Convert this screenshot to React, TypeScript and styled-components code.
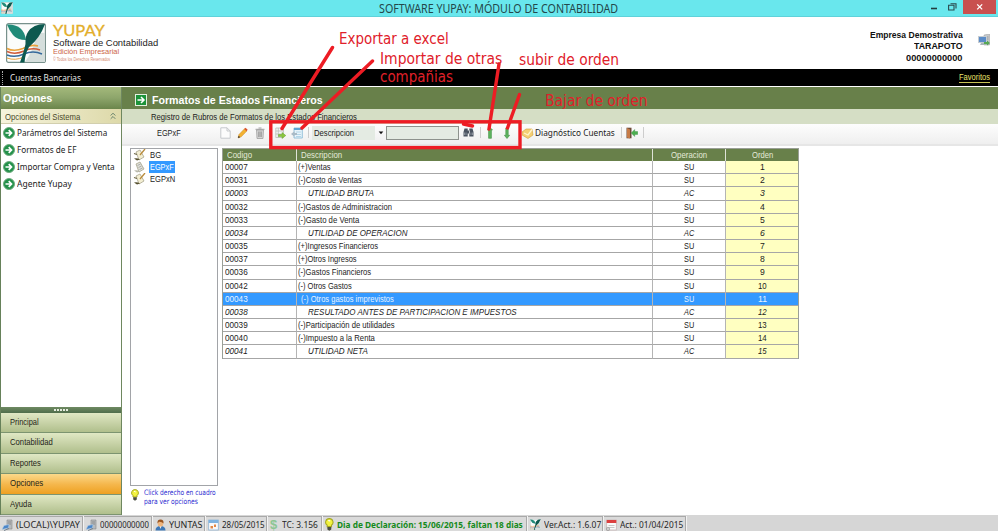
import React, { useLayoutEffect, useRef, useState } from "react";
import styled, { createGlobalStyle, css } from "styled-components";

const SANS = '"Liberation Sans", Arial, sans-serif';
const UI = '"Noto Sans", "Open Sans", sans-serif';

const Global = createGlobalStyle`
  * { box-sizing: border-box; }
  html, body { margin: 0; padding: 0; background: #fff; overflow: hidden; }
  svg { display: block; flex: none; }
`;

/* Text condensed or widened to a given width */
const FitBox = styled.span<{ $w: number }>`
  display: block;
  flex: none;
  width: ${(p) => p.$w}px;
  white-space: pre;
`;
const FitInner = styled.span`
  display: inline-block;
  transform-origin: 0 50%;
`;
function Fit({ w, children }: { w: number; children: string }) {
  const ref = useRef<HTMLSpanElement>(null);
  const [scale, setScale] = useState(1);
  useLayoutEffect(() => {
    if (ref.current) setScale(w / ref.current.offsetWidth);
  }, [w, children]);
  return (
    <FitBox $w={w}>
      <FitInner ref={ref} style={{ transform: `scaleX(${scale})` }}>{children}</FitInner>
    </FitBox>
  );
}

const Window = styled.div`
  position: relative;
  width: 998px;
  height: 531px;
  display: flex;
  flex-direction: column;
  background: #fff;
  font-family: ${SANS};
  font-size: 9.8px;
  color: #1c1c1c;
`;

const TitleBar = styled.header`
  height: 17px;
  flex: none;
  display: flex;
  justify-content: space-between;
  background: #69e7ed;
  border-bottom: 1px solid #5fd2da;
  padding: 0 2px 0 1px;
`;
const TitleIcon = styled.div`
  padding-top: 2px;
  width: 378px;
`;
const TitleText = styled.div`
  font: 12px/17px ${UI};
  color: #24484b;
`;
const WinButtons = styled.div`
  flex: 1;
  display: flex;
  justify-content: flex-end;
`;

const Banner = styled.div`
  height: 52px;
  flex: none;
  display: flex;
  padding-left: 6px;
`;
const LogoWrap = styled.div`
  padding-top: 6px;
  width: 47px;
`;
const Brand = styled.div`
  flex: 1;
  padding-top: 6px;
`;
const BrandName = styled.div`
  font: 15.5px/15px Lato, ${SANS};
  color: #e3ae2b;
  -webkit-text-stroke: 0.3px #e3ae2b;
`;
const BrandLine = styled.div`
  font: 9.5px/9px ${SANS};
  color: #222;
`;
const BrandEdition = styled.div`
  font: 8px/10px ${SANS};
  color: #cc6647;
`;
const BrandRights = styled.div`
  font: 4.5px/6px ${SANS};
  color: #d58a72;
`;
const Company = styled.div`
  display: flex;
  flex-direction: column;
  align-items: flex-end;
  padding-top: 11.5px;
  margin-right: 16px;
  font: bold 9.8px/11.6px ${SANS};
  color: #111;
`;
const BannerIcon = styled.div`
  padding: 17px 8px 0 0;
`;

const MenuBar = styled.div`
  height: 17px;
  flex: none;
  display: flex;
  align-items: center;
  justify-content: space-between;
  background: #000;
  color: #e4e4e4;
  font: 9.5px/16px ${UI};
  padding: 0 8px 0 2px;
`;
const MenuLeft = styled.div`
  display: flex;
  align-items: center;
`;
const Grip = styled.i`
  height: 14px;
  width: 8px;
  border-left: 1px dotted #aaa;
`;
const Favorites = styled.a`
  font: 9px/9px ${SANS};
  color: #e9e36b;
  border-bottom: 1px solid #c9c455;
`;

const Body = styled.div`
  height: 428px;
  flex: none;
  display: flex;
  margin-top: 1px;
`;

const Sidebar = styled.aside`
  width: 121.5px;
  flex: none;
  display: flex;
  flex-direction: column;
  border-left: 1px solid #66815a;
  border-right: 1px solid #6e875f;
`;
const SideTitle = styled.h2`
  margin: 0;
  height: 22px;
  padding-left: 1.7px;
  font: bold 11.5px/22px ${SANS};
  color: #fff;
  background: linear-gradient(#a4b97b, #8da56b 50%, #6b854b);
`;
const SideGroup = styled.div`
  height: 15px;
  display: flex;
  justify-content: space-between;
  align-items: center;
  padding: 0 5px 0 3.5px;
  color: #4a4a2c;
  background: linear-gradient(90deg, #f6f4dd, #ddd9a9);
  border-bottom: 1px solid #d2cfae;
`;
const SideList = styled.nav`
  flex: 1;
`;
const SideLink = styled.div`
  height: 17px;
  display: flex;
  align-items: center;
  gap: 2px;
  padding-left: 1.5px;
  font: 9.5px/16px ${UI};
  color: #222;
`;
const Splitter = styled.div`
  height: 6px;
  display: flex;
  justify-content: center;
  align-items: center;
  gap: 1px;
  background: linear-gradient(#6f8a62, #4f6d4b);
`;
const Dot = styled.i`
  width: 2px;
  height: 2px;
  background: #e6ecdf;
`;
const NavButton = styled.div<{ $active?: boolean }>`
  height: 20.5px;
  padding-left: 9px;
  line-height: 18px;
  color: #1f2418;
  border-bottom: 1px solid #7c9470;
  background: ${(p) =>
    p.$active ? "linear-gradient(#fbd98a, #f5b84e 50%, #eea020)" : "linear-gradient(#e0e8c4, #c8d3a8 50%, #b0bf8c)"};
`;

const Main = styled.main`
  flex: 1;
  display: flex;
  flex-direction: column;
`;
const PageTitle = styled.h1`
  margin: 0;
  height: 22px;
  display: flex;
  align-items: center;
  gap: 5px;
  padding: 3px 0 0 13px;
  background: #68804a;
  color: #fff;
  font: bold 11px/18px ${SANS};
`;
const PageSub = styled.div`
  height: 15px;
  padding-left: 29.5px;
  line-height: 15px;
  background: #d5dec5;
`;
const Toolbar = styled.div`
  height: 22px;
  display: flex;
  align-items: center;
  padding: 0 0 3px 35px;
  background: linear-gradient(#fdfdfd, #efefef);
  border-bottom: 2px solid #e6e6e6;
`;
const Tool = styled.div<{ $w: number }>`
  width: ${(p) => p.$w}px;
  flex: none;
`;
const Sep = styled.i<{ $w: number }>`
  width: ${(p) => p.$w}px;
  height: 11px;
  border-left: 1px solid #cdcdcd;
`;
const Combo = styled.div`
  width: 74px;
  display: flex;
  align-items: center;
`;
const ComboText = styled.div`
  width: 63px;
  height: 14px;
  line-height: 14px;
  padding-left: 2px;
  background: #e4ebe3;
  margin-right: 3px;
`;
const Search = styled.div`
  width: 73px;
  height: 14px;
  margin-right: 4px;
  background: #e4ebe3;
  border: 1px solid #8d928d;
`;
const ToolText = styled.div`
  width: 86px;
  font: 9.5px/14px ${UI};
`;

const Content = styled.div`
  flex: 1;
  display: flex;
  gap: 4.5px;
  padding: 2px 0 0 8.5px;
`;
const TreeCol = styled.div`
  width: 87.5px;
  flex: none;
`;
const Tree = styled.div`
  height: 338px;
  border: 1px solid #a2a4a8;
  padding-left: 2px;
`;
const TreeRow = styled.div`
  height: 12px;
  display: flex;
  align-items: center;
  gap: 2.5px;
`;
const TreeLabel = styled.span<{ $on?: boolean }>`
  padding: 0 1px 0 1.5px;
  line-height: 12px;
  ${(p) => p.$on && css`background: #3399ff; color: #fff;`}
`;
const Hint = styled.div`
  display: flex;
  gap: 5px;
  padding: 3px 0 0 1px;
  font: 7.5px/8.7px "DejaVu Sans", sans-serif;
  color: #2a2ad0;
`;

const Table = styled.div`
  width: 577px;
  height: 211px;
  border: 1px solid #9a9f96;
`;
const Row = styled.div<{ $kind?: "head" | "total" | "sel" }>`
  display: grid;
  grid-template-columns: 73.5px 356px 73.5px 1fr;
  height: 13.18px;
  line-height: 12px;
  ${(p) => p.$kind === "head" && css`
    height: 12px; background: #68804a; color: #e4ead8;
    > div { border-bottom: 0; border-right-color: #dfe3d8; padding-left: 4px; }
  `}
  ${(p) => p.$kind === "total" && css`font-style: italic;`}
  ${(p) => p.$kind === "sel" && css`background: #3399ff; color: #e8f3ff;`}
`;
const Cell = styled.div<{ $center?: boolean; $yellow?: boolean; $indent?: number }>`
  display: flex;
  padding-left: ${(p) => p.$indent ?? 2}px;
  border-right: 1px solid #b4b4b4;
  border-bottom: 1px solid #a6a6a6;
  ${(p) => p.$center && css`justify-content: center; padding-left: 0 !important;`}
  ${(p) => p.$yellow && css`background: #ffffc1;`}
  &:last-child { border-right: 0; }
`;

const StatusBar = styled.footer`
  height: 16px;
  flex: none;
  display: flex;
  background: #d6d6d6;
  gap: 1px;
  padding-top: 1px;
`;
const StatusCell = styled.div<{ $w: number; $green?: boolean }>`
  width: ${(p) => p.$w}px;
  flex: none;
  display: flex;
  align-items: center;
  gap: 3px;
  padding: 1px 0 0 2px;
  overflow: hidden;
  background: #dadada;
  border: 1px solid #a9a9a9;
  border-width: 1px 1px 0 0;
  box-shadow: 1px 0 0 #f2f2f2;
  font: 9.5px/13px ${UI};
  color: #262626;
  ${(p) => p.$green && css`color: #158a1c; font-weight: bold;`}
`;

const Marks = styled.div`
  position: absolute;
  inset: 0;
  pointer-events: none;
`;
const Note = styled.div<{ $x: number; $y: number }>`
  position: absolute;
  left: ${(p) => p.$x}px;
  top: ${(p) => p.$y}px;
  font: 16px/20px "DejaVu Sans", sans-serif;
  color: #e0202a;
`;

const Logo = ({ s }: { s: number }) => (
  <svg width={s} height={s} viewBox="0 0 40 40">
    <rect x="0.6" y="0.6" width="38.8" height="38.8" rx="2" fill="#fbfcfb" stroke="#78918c" strokeWidth="1.2" />
    <path d="M31 11 Q37 9 39 10 V39 H19 Q27 28 31 11Z" fill="#d5dedc" />
    <path d="M1 25.5 Q8 29 17 25.5 Q25 21 32 23" fill="none" stroke="#e8a13a" strokeWidth="1.6" />
    <path d="M1 28.5 Q9 32 18 28 Q26 24 34 27" fill="none" stroke="#cf5b3a" strokeWidth="1.5" />
    <path d="M1 32 Q9 35 18 31 Q27 27 36 31" fill="none" stroke="#35699c" strokeWidth="1.5" />
    <path d="M1 35 Q9 38 18 34" fill="none" stroke="#e8a13a" strokeWidth="1" />
    <path d="M1 1.5 Q9 1 14 5 Q19 9 20 17 Q11 17 7 12 Q3 7 1 1.5Z" fill="#208a78" />
    <path d="M39 1 Q27 1 22 9 Q19 13 19.5 21 Q18 28 14 39.5 H18.5 Q19 31 23 24 Q34 15 39 1Z" fill="#0d594f" />
  </svg>
);
const ArrowBall = () => (
  <svg width="12" height="12" viewBox="0 0 12 12">
    <circle cx="6" cy="6" r="5.5" fill="#23914a" stroke="#71ad80" />
    <path d="M2.5 6H8.4M5.7 3.2L8.5 6L5.7 8.8" fill="none" stroke="#fff" strokeWidth="1.7" />
  </svg>
);
const ArrowSquare = () => (
  <svg width="12" height="12" viewBox="0 0 12 12">
    <rect x=".5" y=".5" width="11" height="11" fill="#1c9339" stroke="#e4f0df" />
    <path d="M2.5 6H8.7M6 3L9 6L6 9" fill="none" stroke="#fff" strokeWidth="1.5" />
  </svg>
);
const Scroll = ({ grey }: { grey?: boolean }) => (
  <svg width="13" height="12" viewBox="0 0 13 12">
    <path d="M3 3L7 1L11 8L6 11Z" fill={grey ? "#dedfd6" : "#f3eed2"} stroke="#a8a58e" strokeWidth=".8" />
    {grey ? (
      <path d="M4.5 4.5L7.5 3M5.5 6.5L8.5 5M6.5 8.5L9.5 7" stroke="#999" strokeWidth=".7" />
    ) : (
      <>
        <path d="M12 0L7 6" stroke="#b98b3c" strokeWidth="1.3" />
        <path d="M1 4.5L4 5.5" stroke="#6b6544" strokeWidth="1.2" />
      </>
    )}
    <path d="M1 9.5Q4 8.5 7 10.5L4 11.5Z" fill={grey ? "#b9b9ac" : "#57512f"} />
  </svg>
);
const Bulb = ({ h = 12 }: { h?: number }) => (
  <svg width={(h * 8) / 12} height={h} viewBox="0 0 8 12">
    <path d="M4 .6A3.3 3.3 0 0 1 6 6.6V8H2V6.6A3.3 3.3 0 0 1 4 .6Z" fill="#f2f23e" stroke="#a5a823" />
    <path d="M3 2.6Q4 2 4.7 3" stroke="#fff" fill="none" />
    <path d="M2.2 8.3H5.8V10.6L4 11.7L2.2 10.6Z" fill="#4c4f42" />
  </svg>
);
const Computer = () => (
  <svg width="12" height="12" viewBox="0 0 12 12">
    <path d="M6 1L11.5 0V11H6Z" fill="#c5c8cb" stroke="#999" strokeWidth=".5" />
    <path d="M7.5 3H10.5M7.5 5H10.5" stroke="#888" strokeWidth=".7" />
    <rect x=".5" y="2.5" width="8" height="6" fill="#5b8cc8" stroke="#c5ccd2" />
    <path d="M3 9L8 8.5L11 11H2Z" fill="#a9b6b8" />
    <path d="M6 8H9V6.5L12 9L9 11.5V10H6Z" fill="#57a854" />
  </svg>
);
const Server = () => (
  <svg width="11" height="12" viewBox="0 0 11 12">
    <path d="M5 1H10V10H5Z" fill="#b7babd" stroke="#888" strokeWidth=".6" />
    <path d="M6 3H9M6 5H9" stroke="#777" strokeWidth=".7" />
    <path d="M0 10.5L2 6.5L7 5.5L6.5 9Z" fill="#4b86c8" stroke="#b7cee5" strokeWidth=".6" />
    <path d="M2 11.5L7 9.5" stroke="#75818c" />
  </svg>
);
const User = () => (
  <svg width="11" height="12" viewBox="0 0 11 12">
    <path d="M.5 11.5Q.5 7 5.5 7Q10.5 7 10.5 11.5Z" fill="#3d78b8" />
    <path d="M4.5 7L5.5 10L6.5 7Z" fill="#f3f3f3" />
    <ellipse cx="5.5" cy="4.4" rx="2.7" ry="3.2" fill="#eeb57e" />
    <path d="M2.5 4.6Q2 .4 5.5.4Q9 .4 8.5 4.6Q7 2.5 4 2.7Z" fill="#99541f" />
  </svg>
);
const Cal = ({ red }: { red?: boolean }) => (
  <svg width="11" height="12" viewBox="0 0 11 12">
    <rect x=".7" y="1" width="9.6" height="10" fill="#fafafa" stroke={red ? "#c9b4b4" : "#8fb4d4"} strokeWidth=".8" />
    <rect x=".7" y="1" width="9.6" height="3" fill={red ? "#dc3f3f" : "#7fb3e0"} />
    {red ? <path d="M2.5 6.5H8.5M2.5 8.5H8.5" stroke="#bbb" strokeWidth=".8" /> : <path d="M2.5 7H5V9.5H2.5ZM6 5.5H8V8H6Z" fill="#e38745" />}
    {red && <circle cx="2" cy="10" r="1.7" fill="#cfcfcf" stroke="#888" strokeWidth=".5" />}
  </svg>
);
const Dollar = styled.span`
  font: bold 13px/13px ${SANS};
  color: #8cc694;
  width: 9px;
`;

type Item = [string, string, number, string, string, ("total" | "sel")?];
const rows: Item[] = [
  ["00007", "(+)Ventas", 32.5, "SU", "1"],
  ["00031", "(-)Costo de Ventas", 64, "SU", "2"],
  ["00003", "UTILIDAD BRUTA", 66, "AC", "3", "total"],
  ["00032", "(-)Gastos de Administracion", 94, "SU", "4"],
  ["00033", "(-)Gasto de Venta", 61, "SU", "5"],
  ["00034", "UTILIDAD DE OPERACION", 99, "AC", "6", "total"],
  ["00035", "(+)Ingresos Financieros", 80, "SU", "7"],
  ["00037", "(+)Otros Ingresos", 59, "SU", "8"],
  ["00036", "(-)Gastos Financieros", 73, "SU", "9"],
  ["00042", "(-) Otros Gastos", 53.5, "SU", "10"],
  ["00043", "(-) Otros gastos imprevistos", 92.5, "SU", "11", "sel"],
  ["00038", "RESULTADO ANTES DE PARTICIPACION E IMPUESTOS", 209, "AC", "12", "total"],
  ["00039", "(-)Participación de utilidades", 97, "SU", "13"],
  ["00040", "(-)Impuesto a la Renta", 76.5, "SU", "14"],
  ["00041", "UTILIDAD NETA", 60, "AC", "15", "total"],
];
const links: [string, number][] = [
  ["Parámetros del Sistema", 90.5],
  ["Formatos de EF", 59.5],
  ["Importar Compra y Venta", 98],
  ["Agente Yupay", 54.5],
];
const navs: [string, number][] = [
  ["Principal", 29],
  ["Contabilidad", 42.5],
  ["Reportes", 31],
  ["Opciones", 33],
  ["Ayuda", 22],
];

export default function App() {
  return (
    <Window>
      <Global />
      <TitleBar>
        <TitleIcon><Logo s={12} /></TitleIcon>
        <TitleText><Fit w={239}>SOFTWARE YUPAY: MÓDULO DE CONTABILIDAD</Fit></TitleText>
        <WinButtons>
          <svg width="66" height="14" viewBox="0 0 66 14">
            <path d="M1 8.5H7" stroke="#233c3f" strokeWidth="1.6" />
            <path d="M20.5 3.8H26V8.5M18.6 5.3H24V10H18.6Z" fill="none" stroke="#2b4a4d" strokeWidth="1.1" />
            <rect x="33" width="33" height="14" fill="#c9504f" />
            <path d="M47.2 4.4L52.2 9.4M52.2 4.4L47.2 9.4" stroke="#fff" strokeWidth="1.3" />
          </svg>
        </WinButtons>
      </TitleBar>

      <Banner>
        <LogoWrap><Logo s={40} /></LogoWrap>
        <Brand>
          <BrandName><Fit w={52}>YUPAY</Fit></BrandName>
          <BrandLine><Fit w={105}>Software de Contabilidad</Fit></BrandLine>
          <BrandEdition><Fit w={66}>Edición Empresarial</Fit></BrandEdition>
          <BrandRights><Fit w={57}>© Todos los Derechos Reservados</Fit></BrandRights>
        </Brand>
        <Company>
          <Fit w={92.5}>Empresa Demostrativa</Fit>
          <Fit w={48.5}>TARAPOTO</Fit>
          <Fit w={56.5}>00000000000</Fit>
        </Company>
        <BannerIcon><Computer /></BannerIcon>
      </Banner>

      <MenuBar>
        <MenuLeft><Grip /><Fit w={70.5}>Cuentas Bancarias</Fit></MenuLeft>
        <Favorites><Fit w={31}>Favoritos</Fit></Favorites>
      </MenuBar>

      <Body>
        <Sidebar>
          <SideTitle><Fit w={49}>Opciones</Fit></SideTitle>
          <SideGroup>
            <Fit w={75}>Opciones del Sistema</Fit>
            <svg width="6" height="8" viewBox="0 0 6 8">
              <path d="M.7 3.5L3 1.2L5.3 3.5M.7 6.8L3 4.5L5.3 6.8" fill="none" stroke="#66806a" />
            </svg>
          </SideGroup>
          <SideList>
            {links.map(([t, w]) => (
              <SideLink key={t}><ArrowBall /><Fit w={w}>{t}</Fit></SideLink>
            ))}
          </SideList>
          <Splitter><Dot /><Dot /><Dot /><Dot /><Dot /></Splitter>
          {navs.map(([t, w]) => (
            <NavButton key={t} $active={t === "Opciones"}><Fit w={w}>{t}</Fit></NavButton>
          ))}
        </Sidebar>

        <Main>
          <PageTitle><ArrowSquare /><Fit w={171}>Formatos de Estados Financieros</Fit></PageTitle>
          <PageSub><Fit w={205.5}>Registro de Rubros de Formatos de los Estados Financieros</Fit></PageSub>
          <Toolbar>
            <Tool $w={63}><Fit w={24}>EGPxF</Fit></Tool>
            <Tool $w={17}>
              <svg width="11" height="12" viewBox="0 0 11 12">
                <path d="M.8.8H7L10.2 4V11.2H.8ZM7 .8V4H10.2" fill="#fcfcfc" stroke="#c6c9cc" />
              </svg>
            </Tool>
            <Tool $w={18}>
              <svg width="11" height="12" viewBox="0 0 11 12">
                <path d="M1 11L2 7.5L7.5 1.8L9.8 4L4.2 9.8Z" fill="#f3b232" stroke="#c98926" strokeWidth=".5" />
                <path d="M7.2 2L8.5.7L10.7 2.8L9.6 4.2Z" fill="#d9532f" />
                <path d="M1 11L1.6 8.8L3.2 10.3Z" fill="#333" />
              </svg>
            </Tool>
            <Tool $w={20.5}>
              <svg width="10" height="12" viewBox="0 0 10 12">
                <path d="M1.5 3H8.5L8 11.5H2Z" fill="#d4d4d4" stroke="#a1a1a1" strokeWidth=".8" />
                <path d="M.5 2.3H9.5M3.5 1H6.5M3.7 4.5V10M5 4.5V10M6.3 4.5V10" stroke="#8d8d8d" strokeWidth=".8" />
              </svg>
            </Tool>
            <Tool $w={16}>
              <svg width="11" height="12" viewBox="0 0 11 12">
                <path d="M.8 1H8.5V10.5H.8ZM.8 4H8.5M.8 7H8.5M3.3 1V10.5" fill="#f5f5f5" stroke="#b8bcb8" strokeWidth=".8" />
                <path d="M3.5 7.5H7V5.5L10.8 8.5L7 11.5V9.6H3.5Z" fill="#8cc63f" stroke="#64a12b" strokeWidth=".5" />
              </svg>
            </Tool>
            <Tool $w={16.5}>
              <svg width="12" height="12" viewBox="0 0 12 12">
                <path d="M3 1H11.3V11H3Z" fill="#e7f3fa" stroke="#82b5d3" strokeWidth=".8" />
                <path d="M3 2H11.3" stroke="#5da5d3" strokeWidth="2" />
                <path d="M5 5H10M5 7.5H10M5 9.5H10" stroke="#a6cde3" strokeWidth=".8" />
                <path d="M0 7L3.5 4.3V6H6V8H3.5V9.7Z" fill="#a9bac6" />
              </svg>
            </Tool>
            <Sep $w={4} />
            <Combo>
              <ComboText><Fit w={40}>Descripcion</Fit></ComboText>
              <svg width="6" height="4" viewBox="0 0 6 4"><path d="M.7.5H5.3L3 3.3Z" fill="#111" /></svg>
            </Combo>
            <Search />
            <Tool $w={17}>
              <svg width="11" height="11" viewBox="0 0 11 11">
                <path d="M.5 5L1.5 1.5H4.7V9.5H.5ZM10.5 5L9.5 1.5H6.3V9.5H10.5ZM4 3.5H7V6.5H4Z" fill="#4b5360" />
                <path d="M1.5 5.5V8M3 5.5V8M8 5.5V8M9.5 5.5V8" stroke="#b4bac2" strokeWidth=".6" />
              </svg>
            </Tool>
            <Sep $w={7} />
            <Tool $w={17}>
              <svg width="6" height="12" viewBox="0 0 6 12"><path d="M3 .5L5.5 3H4.4V11.3H1.6V3H.5Z" fill="#5fb45f" stroke="#3b8f42" strokeWidth=".6" /></svg>
            </Tool>
            <Tool $w={18}>
              <svg width="6" height="12" viewBox="0 0 6 12"><path d="M3 11.5L5.6 8.3H4.2V1H1.8V8.3H.4Z" fill="#5fb45f" stroke="#3b8f42" strokeWidth=".6" /></svg>
            </Tool>
            <Tool $w={13.5}>
              <svg width="12" height="12" viewBox="0 0 12 12">
                <path d="M0 5L4 2L10 2L11 8L6 11.5L0 8Z" fill="#f4cf74" stroke="#d29d35" strokeWidth=".6" />
                <path d="M2 6L6 8L10 2.5" fill="none" stroke="#fff3cb" strokeWidth="1.3" />
              </svg>
            </Tool>
            <ToolText><Fit w={80}>Diagnóstico Cuentas</Fit></ToolText>
            <Sep $w={5} />
            <Tool $w={17}>
              <svg width="12" height="12" viewBox="0 0 12 12">
                <path d="M.5.7H5.5V11.3H.5Z" fill="#6d4b38" />
                <path d="M1 1L4 2.5V11.5L1 10.5Z" fill="#c77b47" />
                <path d="M11.7 4.6H8.7V2.5L5.2 6L8.7 9.5V7.4H11.7Z" fill="#4caf50" stroke="#358c3e" strokeWidth=".4" />
              </svg>
            </Tool>
            <Sep $w={2} />
          </Toolbar>

          <Content>
            <TreeCol>
              <Tree>
                <TreeRow><Scroll /><TreeLabel><Fit w={11}>BG</Fit></TreeLabel></TreeRow>
                <TreeRow><Scroll grey /><TreeLabel $on><Fit w={24}>EGPxF</Fit></TreeLabel></TreeRow>
                <TreeRow><Scroll /><TreeLabel><Fit w={25.5}>EGPxN</Fit></TreeLabel></TreeRow>
              </Tree>
              <Hint>
                <Bulb />
                <div>
                  <Fit w={72}>Click derecho en cuadro</Fit>
                  <Fit w={53.5}>para ver opciones</Fit>
                </div>
              </Hint>
            </TreeCol>
            <Table>
              <Row $kind="head">
                <Cell><Fit w={25}>Codigo</Fit></Cell>
                <Cell><Fit w={41}>Descripcion</Fit></Cell>
                <Cell $center><Fit w={36}>Operacion</Fit></Cell>
                <Cell $center><Fit w={21}>Orden</Fit></Cell>
              </Row>
              {rows.map(([code, desc, w, op, n, kind]) => (
                <Row key={code} $kind={kind}>
                  <Cell><Fit w={22.5}>{code}</Fit></Cell>
                  <Cell $indent={kind === "total" ? 11.5 : kind === "sel" ? 4 : 1.5}><Fit w={w}>{desc}</Fit></Cell>
                  <Cell $center><Fit w={10.5}>{op}</Fit></Cell>
                  <Cell $center $yellow={kind !== "sel"}><Fit w={n.length * 4.4}>{n}</Fit></Cell>
                </Row>
              ))}
            </Table>
          </Content>
        </Main>
      </Body>

      <StatusBar>
        <StatusCell $w={83}><Server /><Fit w={64}>(LOCAL)\YUPAY</Fit></StatusCell>
        <StatusCell $w={68}><Server /><Fit w={49}>00000000000</Fit></StatusCell>
        <StatusCell $w={52}><User /><Fit w={33}>YUNTAS</Fit></StatusCell>
        <StatusCell $w={61}><Cal /><Fit w={43}>28/05/2015</Fit></StatusCell>
        <StatusCell $w={54}><Dollar>$</Dollar><Fit w={35.5}>TC: 3.156</Fit></StatusCell>
        <StatusCell $w={204} $green><Bulb h={13} /><Fit w={186}>Dia de Declaración: 15/06/2015, faltan 18 dias</Fit></StatusCell>
        <StatusCell $w={75}><Logo s={11} /><Fit w={57}>Ver.Act.: 1.6.07</Fit></StatusCell>
        <StatusCell $w={82}><Cal red /><Fit w={63}>Act.: 01/04/2015</Fit></StatusCell>
      </StatusBar>

      <Marks>
        <Note $x={339} $y={29}><Fit w={110}>Exportar a excel</Fit></Note>
        <Note $x={379.5} $y={49}><Fit w={122}>Importar de otras</Fit></Note>
        <Note $x={379.5} $y={67}><Fit w={73}>compañias</Fit></Note>
        <Note $x={519} $y={50}><Fit w={100}>subir de orden</Fit></Note>
        <Note $x={545} $y={90.5}><Fit w={102.5}>Bajar de orden</Fit></Note>
        <svg width="998" height="531" viewBox="0 0 998 531" fill="none" stroke="#ed1c24" strokeWidth="3.4" strokeLinecap="round">
          <rect x="270.8" y="121.8" width="249.2" height="25.8" strokeLinejoin="miter" />
          <path d="M332.5 47.5L282 128.5M372.5 61L302 128M499 64L489 129M519.5 94.5L507.5 128M463.5 124L472.5 126" />
        </svg>
      </Marks>
    </Window>
  );
}
